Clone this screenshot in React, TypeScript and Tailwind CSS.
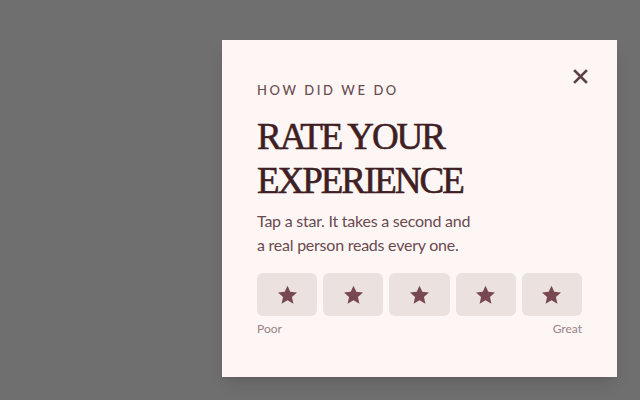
import React from "react";

const labels = ["1 star", "2 stars", "3 stars", "4 stars", "5 stars"];

function Star() {
  return (
    <svg width="21" height="20" viewBox="0 0 24 23" fill="#774850" aria-hidden="true">
      <path d="M12 0.8l3.2 7.1 7.7 0.8-5.8 5.2 1.7 7.6L12 17.6l-6.8 3.9 1.7-7.6-5.8-5.2 7.7-0.8z" />
    </svg>
  );
}

export default function App() {
  return (
    <div className="w-[640px] h-[400px] bg-[#6f6f6f] pl-[222px] pt-[40px] overflow-hidden">
      <div className="relative w-[395px] h-[337px] bg-[#fdf6f4] px-[35px] pt-[42px] shadow-lg" style={{ fontFamily: "Lato, 'Open Sans', sans-serif" }}>
        <button aria-label="Close" className="absolute right-[28px] top-[27px] w-[18px] h-[18px] flex items-center justify-center">
          <svg width="15" height="15" viewBox="0 0 15 15" stroke="#5e4147" strokeWidth="2.6" strokeLinecap="square">
            <path d="M2 2l11 11M13 2L2 13" />
          </svg>
        </button>
        <p className="text-[13px] leading-[16px] tracking-[0.2em] text-[#6b4a50] font-medium">HOW DID WE DO</p>
        <h1
          className="mt-[17px] text-[37px] leading-[44px] tracking-[-0.055em] text-[#3f1e24]"
          style={{ fontFamily: "'Liberation Serif', 'DejaVu Serif', serif", WebkitTextStroke: "0.6px #3f1e24" }}
        >
          RATE YOUR
          <br />
          EXPERIENCE
        </h1>
        <p className="mt-[6px] w-[222px] text-[16px] leading-[24px] tracking-[-0.015em] text-[#6b4a50]">
          Tap a star. It takes a second and a real person reads every one.
        </p>
        <div className="mt-[16px] grid grid-cols-5 gap-[6px]">
          {labels.map((l) => (
            <button key={l} aria-label={l} className="h-[43px] rounded-[6px] bg-[#ebe1df] flex items-center justify-center">
              <Star />
            </button>
          ))}
        </div>
        <div className="mt-[5px] flex justify-between text-[12px] leading-[16px] text-[#9a8286]">
          <span>Poor</span>
          <span>Great</span>
        </div>
      </div>
    </div>
  );
}
